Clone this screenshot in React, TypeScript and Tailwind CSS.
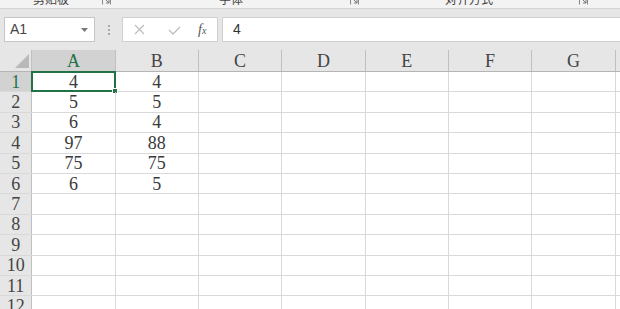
import React from 'react';

const cols = ['A', 'B', 'C', 'D', 'E', 'F', 'G'];
const data: string[][] = [
  ['4', '4'],
  ['5', '5'],
  ['6', '4'],
  ['97', '88'],
  ['75', '75'],
  ['6', '5'],
];
const rowCount = 12;

function Launcher() {
  return (
    <svg width="9" height="9" viewBox="0 0 9 9" className="shrink-0">
      <path d="M0.5 0.5 H8.5 V8.5" fill="none" stroke="#888" strokeWidth="1" />
      <path d="M0.5 0.5 V8.5" fill="none" stroke="#888" strokeWidth="1" />
      <path d="M3 3 L7 7 M7 4 V7 H4" fill="none" stroke="#777" strokeWidth="1" />
    </svg>
  );
}

function Ribbon() {
  return (
    <div className="h-[8px] overflow-hidden bg-[#f3f3f3] flex items-start text-[12px] leading-[12px] text-[#444] font-['Noto_Sans_CJK_SC',sans-serif]">
      <span className="ml-[33px] -mt-[7px]">剪贴板</span>
      <span className="ml-[33px] -mt-[4px]"><Launcher /></span>
      <span className="ml-[108px] -mt-[7px]">字体</span>
      <span className="ml-[107px] -mt-[4px]"><Launcher /></span>
      <span className="ml-[86px] -mt-[7px]">对齐方式</span>
      <span className="ml-[86px] -mt-[4px]"><Launcher /></span>
    </div>
  );
}

function FormulaBar() {
  return (
    <div className="bg-[#e6e6e6] border-t border-[#d4d4d4] h-[42px] pt-[8px] flex items-start font-['Liberation_Sans',sans-serif]">
      <div className="ml-[4px] w-[91px] h-[25px] bg-white border border-[#c6c6c6] flex items-center justify-between pl-[5px] pr-[6px]">
        <span className="text-[14px] text-[#444]">A1</span>
        <svg width="7" height="4" viewBox="0 0 7 4">
          <path d="M0 0 H7 L3.5 4 Z" fill="#777" />
        </svg>
      </div>
      <div className="w-[27px] h-[25px] flex flex-col items-center justify-center gap-[2px]">
        <span className="w-[2px] h-[2px] bg-[#aaa]" />
        <span className="w-[2px] h-[2px] bg-[#aaa]" />
        <span className="w-[2px] h-[2px] bg-[#aaa]" />
      </div>
      <div className="w-[96px] h-[25px] bg-white border border-[#d0d0d0] flex items-center pl-[11px]">
        <svg width="11" height="11" viewBox="0 0 11 11">
          <path d="M1 1 L10 10 M10 1 L1 10" stroke="#bdbdbd" strokeWidth="1.2" />
        </svg>
        <svg width="13" height="9" viewBox="0 0 13 9" className="ml-[23px] mt-[2px]">
          <path d="M1 4 L5 8 L12 1" fill="none" stroke="#bdbdbd" strokeWidth="1.3" />
        </svg>
        <span className="ml-[17px] text-[14px] italic text-[#555] font-['Liberation_Serif',serif]">
          f<span className="text-[10px]">x</span>
        </span>
      </div>
      <div className="ml-[4px] flex-1 h-[25px] bg-white border-y border-l border-[#d0d0d0] flex items-center pl-[10px]">
        <span className="text-[14px] text-[#333]">4</span>
      </div>
    </div>
  );
}

function HeaderRow() {
  return (
    <div className="flex h-[22px] bg-[#e6e6e6] border-b border-[#b5b5b5]">
      <div className="w-[32.3px] shrink-0 border-r border-[#c0c0c0] flex items-end justify-end pr-[2px] pb-[3px]">
        <svg width="14" height="14" viewBox="0 0 14 14">
          <path d="M14 0 V14 H0 Z" fill="#b9b9b9" />
        </svg>
      </div>
      {cols.map((c) => (
        <div
          key={c}
          className={
            c === 'A'
              ? 'w-[83.33px] shrink-0 bg-[#d2d2d2] border-r border-[#c0c0c0] flex items-center justify-center text-[#217346]'
              : 'w-[83.33px] shrink-0 border-r border-[#c0c0c0] flex items-center justify-center text-[#444]'
          }
        >
          {c}
        </div>
      ))}
      <div className="flex-1" />
    </div>
  );
}

function DataRow({ r }: { r: number }) {
  const vals = data[r - 1] || [];
  return (
    <div className="flex h-[20.4px] border-b border-[#d9d9d9]">
      <div
        className={
          r === 1
            ? 'w-[32.3px] shrink-0 bg-[#d2d2d2] border-r border-[#c0c0c0] flex items-center justify-center text-[#217346]'
            : 'w-[32.3px] shrink-0 bg-[#e6e6e6] border-r border-[#c0c0c0] flex items-center justify-center text-[#444]'
        }
      >
        {r}
      </div>
      {cols.map((c, i) => (
        <div
          key={c}
          className="relative w-[83.33px] shrink-0 border-r border-[#d9d9d9] flex items-center justify-center text-[#3a3a3a]"
        >
          {vals[i] || ''}
          {r === 1 && i === 0 && (
            <div className="absolute -left-[1px] -top-[1px] -right-[1px] -bottom-[1px] border-2 border-[#217346]">
              <div className="absolute -right-[4px] -bottom-[4px] w-[6px] h-[6px] bg-[#217346] border border-white" />
            </div>
          )}
        </div>
      ))}
      <div className="flex-1" />
    </div>
  );
}

export default function App() {
  const rows = Array.from({ length: rowCount }, (_, i) => i + 1);
  return (
    <div className="w-[620px] h-[309px] overflow-hidden bg-white">
      <Ribbon />
      <FormulaBar />
      <div className="text-[18px] leading-none font-['Liberation_Serif',serif]">
        <HeaderRow />
        {rows.map((r) => (
          <DataRow key={r} r={r} />
        ))}
      </div>
    </div>
  );
}
